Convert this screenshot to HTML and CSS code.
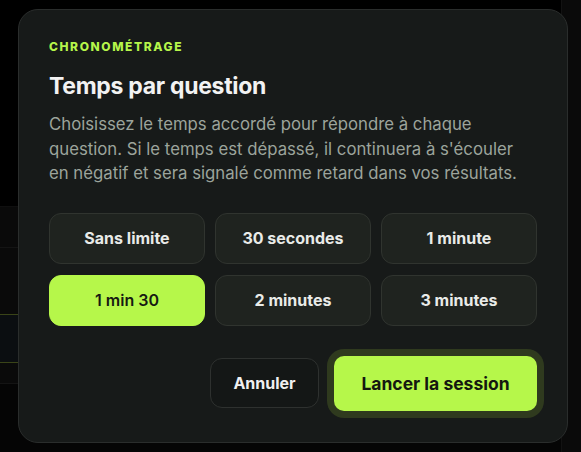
FILE: index.html
```html
<!DOCTYPE html>
<html lang="fr">
<head>
    <meta charset="UTF-8">
    <meta name="viewport" content="width=device-width, initial-scale=1.0">
    <title>Temps par question</title>
    <link rel="stylesheet" href="styles.css">
</head>
<body>
    <!-- Page behind the dialog (dimmed) -->
    <div class="backdrop">
        <div class="page-list">
            <div class="row row-top"></div>
            <div class="row row-a"></div>
            <div class="row row-b"></div>
            <div class="row row-active"></div>
            <div class="row row-c"></div>
            <div class="row row-rest"></div>
        </div>
        <div class="page-side"></div>
    </div>

    <!-- Timer dialog -->
    <div class="modal">
        <div class="eyebrow">Chronométrage</div>
        <h2 class="modal-title">Temps par question</h2>
        <p class="modal-text">Choisissez le temps accordé pour répondre à chaque question. Si le temps est dépassé, il continuera à s'écouler en négatif et sera signalé comme retard dans vos résultats.</p>

        <div class="options">
            <button class="option">Sans limite</button>
            <button class="option">30 secondes</button>
            <button class="option">1 minute</button>
            <button class="option selected">1 min 30</button>
            <button class="option">2 minutes</button>
            <button class="option">3 minutes</button>
        </div>

        <div class="actions">
            <button class="btn-cancel">Annuler</button>
            <button class="btn-start">Lancer la session</button>
        </div>
    </div>
</body>
</html>
```

FILE: styles.css
```css
* {
    box-sizing: border-box;
}
body {
    margin: 0;
    background-color: #000;
    font-family: Inter, "Noto Sans", sans-serif;
    height: 452px;
    overflow: hidden;
}
.backdrop {
    display: flex;
    height: 100%;
}
.page-list {
    flex: 1;
    display: flex;
    flex-direction: column;
}
.row {
    border-bottom: 1px solid #141414;
}
.row-top {
    height: 207px;
    background-color: #000;
    border-bottom-color: #0f0f0f;
}
.row-a {
    height: 41px;
    background-color: #0a0a0a;
}
.row-b {
    height: 67px;
    background-color: #0a0a0a;
    border-bottom: 1px solid #3a4418;
}
.row-active {
    height: 48px;
    background-color: #0b0e11;
    border-bottom: 1px solid #3a4418;
}
.row-c {
    height: 21px;
    background-color: #0a0a0a;
}
.row-rest {
    flex: 1;
    background-color: #050505;
    border-bottom: none;
}
.page-side {
    width: 20px;
    background-color: #0a0a0a;
    border-left: 1px solid #121212;
}

.modal {
    position: absolute;
    top: 9px;
    left: 18px;
    width: 550px;
    height: 434px;
    background-color: #171a19;
    border: 1px solid #2a2d2c;
    border-radius: 20px;
    padding: 30px;
}
.eyebrow {
    font-size: 12px;
    font-weight: 800;
    letter-spacing: 1.6px;
    text-transform: uppercase;
    color: #b6f54a;
    line-height: 14px;
}
.modal-title {
    margin: 18px 0 0;
    font-size: 23px;
    font-weight: 700;
    letter-spacing: -0.3px;
    color: #f2f2f2;
    line-height: 28px;
}
.modal-text {
    margin: 12px 0 0;
    max-width: 482px;
    font-size: 16.75px;
    line-height: 24.5px;
    color: #9ca49c;
}
.options {
    margin-top: 27px;
    display: grid;
    grid-template-columns: repeat(3, 1fr);
    gap: 11px 10px;
}
.option {
    height: 51px;
    background-color: #1f231f;
    border: 1px solid #30342f;
    border-radius: 12px;
    color: #e9ebe8;
    font-family: inherit;
    font-size: 16px;
    font-weight: 700;
    cursor: pointer;
}
.option.selected {
    background-color: #b6f74a;
    border-color: #b6f74a;
    color: #161a12;
    font-weight: 600;
}
.actions {
    margin-top: 30px;
    display: flex;
    justify-content: flex-end;
    align-items: center;
    gap: 15px;
}
.btn-cancel {
    width: 109px;
    height: 50px;
    background-color: #141716;
    border: 1px solid #2e312f;
    border-radius: 12px;
    color: #f0f0f0;
    font-family: inherit;
    font-size: 16px;
    font-weight: 700;
    cursor: pointer;
}
.btn-start {
    width: 203px;
    height: 55px;
    background-color: #b6f74a;
    border: none;
    border-radius: 10px;
    box-shadow: 0 0 0 7px #2f3a1e;
    color: #141810;
    font-family: inherit;
    font-size: 17.5px;
    font-weight: 700;
    cursor: pointer;
}
```
